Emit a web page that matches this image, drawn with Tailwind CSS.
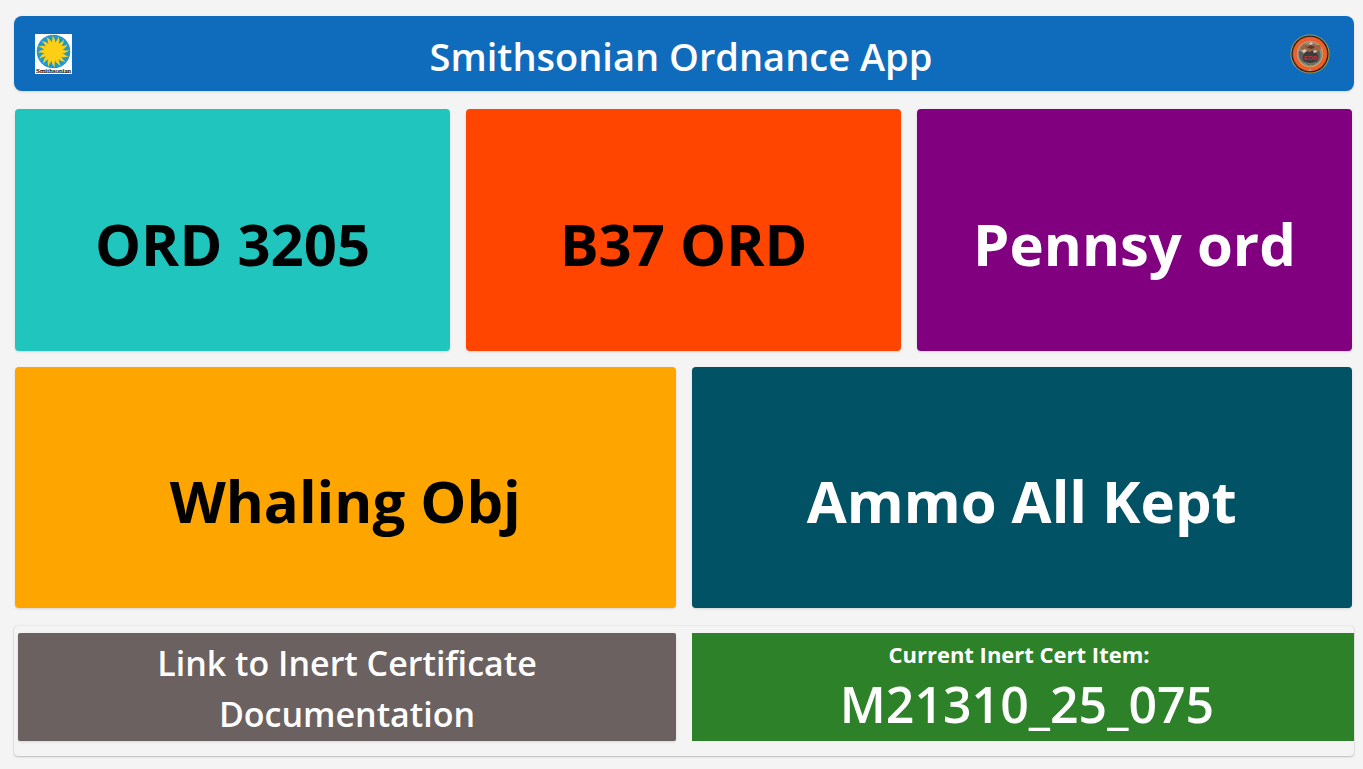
<!DOCTYPE html>
<html lang="en">
<head>
<meta charset="utf-8">
<meta name="viewport" content="width=device-width, initial-scale=1">
<title>Smithsonian Ordnance App</title>
<script src="https://cdn.jsdelivr.net/npm/@tailwindcss/browser@4"></script>
</head>
<body class="flex min-h-screen flex-col bg-[#f4f4f4] pt-4 pr-[9px] pb-[13px] pl-[14px] font-['Segoe_UI','Open_Sans','Noto_Sans',sans-serif] text-white">
<header class="flex h-[75px] shrink-0 items-center justify-between rounded-lg bg-[#0f6cbd] pr-6 pl-[21px] shadow-sm">
  <svg class="h-10 w-[37px]" viewBox="0 0 37 40" role="img" aria-label="Smithsonian logo">
    <defs><path id="ray" d="M-2.1-8C-1.6-11-.4-12.500-1.400-16 .8-13.500 2-12 1.700-8Z"/>
    <g id="rays"><use href="#ray"/><use href="#ray" transform="rotate(22.5)"/><use href="#ray" transform="rotate(45)"/><use href="#ray" transform="rotate(67.5)"/></g></defs>
    <path fill="#fff" d="M0 0h37v40H0z"/>
    <circle cx="18.5" cy="17.5" r="16.8" fill="#1f98d0"/>
    <g transform="translate(18.5 17.5)" fill="#fccf16">
      <circle r="9.3"/>
      <use href="#rays"/><use href="#rays" transform="rotate(90)"/><use href="#rays" transform="rotate(180)"/><use href="#rays" transform="rotate(270)"/>
    </g>
    <text x="18.5" y="39" text-anchor="middle" font-family="Liberation Serif, serif" font-size="7" fill="#000" stroke="#000" stroke-width=".2">Smithsonian</text>
  </svg>
  <h1 class="pt-1 text-[38px] leading-[52px] font-semibold">Smithsonian Ordnance App</h1>
  <svg class="size-10" viewBox="0 0 40 40" role="img" aria-label="EOD emblem">
    <circle cx="20" cy="20" r="19.6" fill="#b29a4c"/>
    <circle cx="20" cy="20" r="18.6" fill="#24231c"/>
    <circle cx="20" cy="20" r="17.3" fill="#e9552d"/>
    <circle cx="20" cy="20" r="15.2" fill="none" stroke="#f0783f" stroke-width="1.4" stroke-dasharray="1 1.2"/>
    <circle cx="20" cy="20" r="13.3" fill="#dda83b"/>
    <circle cx="20" cy="20" r="12.4" fill="#8b8a87"/>
    <path fill="#5e5d5a" d="M9 17q-1 8 5 12l4-2-6-10zM29 16q4 7-2 13l-4-2 3-10z"/>
    <circle cx="20.500" cy="23.500" r="7.600" fill="#3b3c3b"/>
    <path fill="#6b716f" d="M14 27q6 4 13 0-2 4-6 4t-7-4z"/>
    <path fill="#9b6444" d="M10 14l4-4 4 1 3-3 4 3 5 0 1 4-4 3-4-2-3 2-4-1-3 1z"/>
    <path fill="#d9c5b0" d="M11 17l4-2 2 2-3 2zM23 17l3-1 1 2-3 1zM19 9l3-1 1 2-3 1z"/>
    <path fill="#58382a" d="M15 12l3 1 3-2 4 2-3 2-4-1z"/>
    <text x="20.5" y="26" text-anchor="middle" font-family="Liberation Sans, sans-serif" font-size="6" font-weight="700" fill="#d3303f">EOD</text>
    <path fill="#a5a08d" d="M20 34l1 2 1 1h-4l1-1z"/>
  </svg>
</header>

<main class="mt-[18px] flex grow flex-col">
  <nav class="flex grow flex-col gap-4 pr-[2px] pl-px text-[58px] leading-[78px] font-bold" aria-label="Locations">
    <div class="grid grow grid-cols-3 gap-4">
      <button class="rounded bg-[#20c5be] pt-7 text-black shadow-sm">ORD 3205</button>
      <button class="rounded bg-[#ff4500] pt-7 text-black shadow-sm">B37 ORD</button>
      <button class="rounded bg-[#800080] pt-7 shadow-sm">Pennsy ord</button>
    </div>
    <div class="grid grow grid-cols-2 gap-4">
      <button class="rounded bg-[#ffa500] pt-7 text-black shadow-sm">Whaling Obj</button>
      <button class="rounded bg-[#005264] pt-7 shadow-sm">Ammo All Kept</button>
    </div>
  </nav>
  <section class="mt-[18px] grid h-[130px] shrink-0 grid-cols-[calc(50%-10px)_1fr] gap-4 rounded pt-[7px] pb-[15px] pl-1 shadow-[0_0_2px_#0002,0_1px_2px_#0003]" aria-label="Inert certificate">
    <button class="rounded-xs bg-[#6b6160] px-32 pt-1 text-[34px] leading-[51px] font-semibold shadow-sm">Link to Inert Certificate Documentation</button>
    <div class="flex flex-col items-center bg-[#2d8128] pt-1.5 font-semibold">
      <h2 class="pr-2 text-[22px] leading-[30px] font-bold">Current Inert Cert Item:</h2>
      <p class="pl-2 text-[50px] leading-[70px]">M21310_25_075</p>
    </div>
  </section>
</main>
</body>
</html>
